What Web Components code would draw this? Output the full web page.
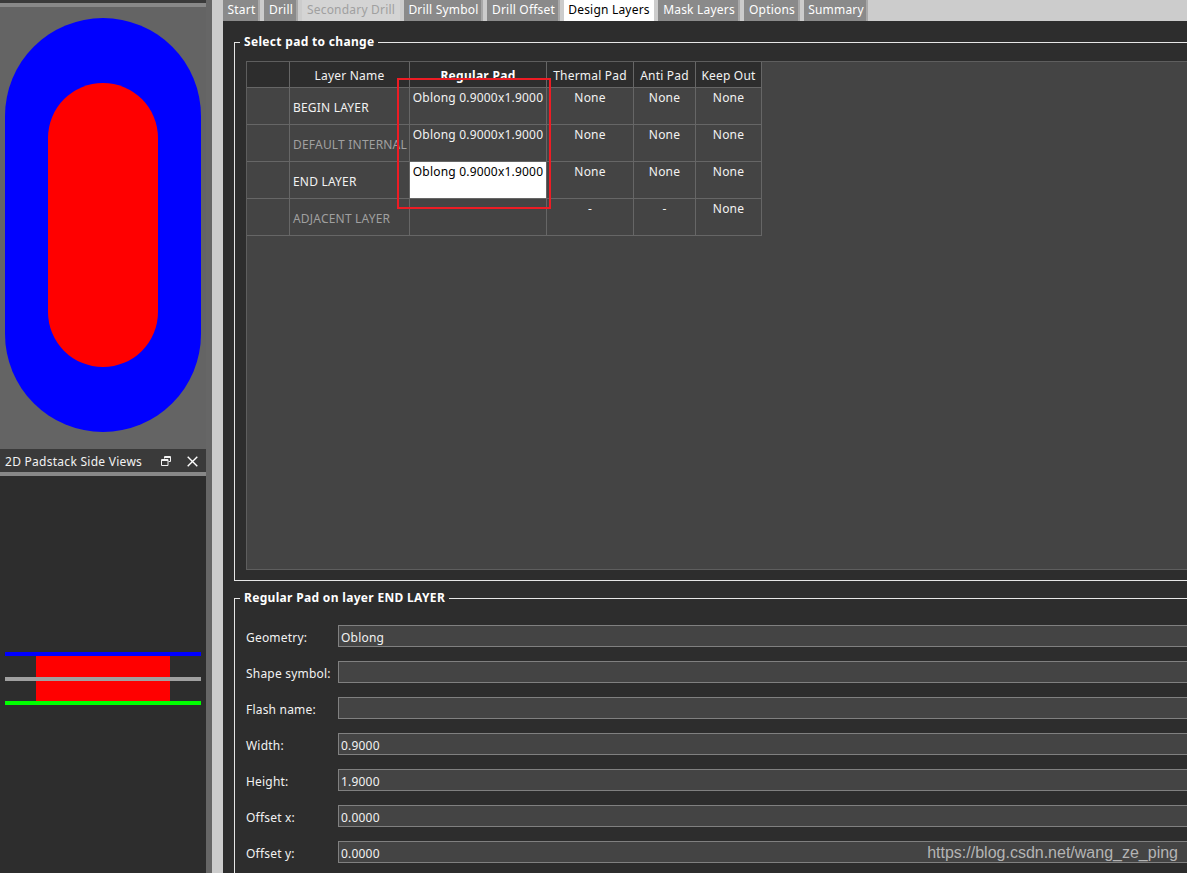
<!DOCTYPE html>
<html>
<head>
<meta charset="utf-8">
<title>Padstack Editor</title>
<style>
  html, body { margin: 0; height: 100%; overflow: hidden; background: #2d2d2d; }
  body { font: 12px "Noto Sans", sans-serif; letter-spacing: .2px; color: #f2f2f2; }
</style>
</head>
<body>
<pad-app>
  <pad-side slot="side"></pad-side>
  <tab-bar slot="main">
    <tab-item w="37">Start</tab-item>
    <tab-item w="34">Drill</tab-item>
    <tab-item w="98" state="disabled">Secondary Drill</tab-item>
    <tab-item w="79">Drill Symbol</tab-item>
    <tab-item w="73">Drill Offset</tab-item>
    <tab-item w="90" state="active">Design Layers</tab-item>
    <tab-item w="82">Mask Layers</tab-item>
    <tab-item w="56">Options</tab-item>
    <tab-item w="64">Summary</tab-item>
  </tab-bar>
  <group-box slot="main" title="Select pad to change" h="546"><pad-table></pad-table></group-box>
  <group-box slot="main" title="Regular Pad on layer END LAYER" h="300">
    <form-row label="Geometry:" value="Oblong"></form-row>
    <form-row label="Shape symbol:"></form-row>
    <form-row label="Flash name:"></form-row>
    <form-row label="Width:" value="0.9000"></form-row>
    <form-row label="Height:" value="1.9000"></form-row>
    <form-row label="Offset x:" value="0.0000"></form-row>
    <form-row label="Offset y:" value="0.0000"></form-row>
  </group-box>
</pad-app>

<script>
class PadApp extends HTMLElement {
  constructor() {
    super();
    this.attachShadow({ mode: "open" });
    this.shadowRoot.innerHTML = `
      <style>
        :host {
          display: grid;
          grid-template-columns: 206px 6px 11px 964px;
          width: 1187px;
          height: 873px;
          overflow: hidden;
          position: relative;
        }
        .sash { background: #666666; }
        .gutter { background: #cccccc; }
        .main { background: #2d2d2d; min-width: 0; }
        .note {
          position: absolute;
          left: 397px;
          top: 78px;
          width: 150px;
          height: 127px;
          border: 2px solid #ed1c24;
        }
        .mark {
          position: absolute;
          right: 9px;
          top: 844px;
          font: 16px "Liberation Sans", sans-serif;
          letter-spacing: 0;
          color: #b4b4b4;
        }
      </style>
      <slot name="side"></slot>
      <div class="sash"></div>
      <div class="gutter"></div>
      <div class="main"><slot name="main"></slot></div>
      <div class="note"></div>
      <div class="mark">https://blog.csdn.net/wang_ze_ping</div>
    `;
  }
}

class PadSide extends HTMLElement {
  constructor() {
    super();
    this.attachShadow({ mode: "open" });
    this.shadowRoot.innerHTML = `
      <style>
        :host { display: flex; flex-direction: column; background: #2d2d2d; height: 873px; }
        .top { height: 3px; background: #3a3a3a; }
        .bar { height: 4px; background: #888888; flex: none; }
        .canvas {
          box-sizing: border-box;
          height: 442px;
          padding-bottom: 6px;
          background: #646464;
          display: flex;
          justify-content: center;
          align-items: center;
        }
        .blue {
          width: 196px;
          height: 414px;
          border-radius: 98px;
          background: #0000ff;
          display: flex;
          justify-content: center;
          align-items: center;
        }
        .red { width: 110px; height: 284px; border-radius: 55px; background: #ff0000; }
        .head {
          box-sizing: border-box;
          height: 23px;
          background: #3a3a3a;
          display: flex;
          align-items: center;
          padding: 1px 8px 0 5px;
          gap: 16px;
          letter-spacing: .27px;
          color: #f2f2f2;
        }
        .head span { flex: 1; white-space: nowrap; }
        svg { display: block; }
        .side {
          padding: 176px 5px 0;
        }
        .line { height: 4px; }
        .fill {
          margin: 0 31px;
          height: 45px;
          background: #ff0000;
          display: flex;
          align-items: center;
        }
        .gray { background: #a0a0a0; flex: 1; margin: 0 -31px; }
      </style>
      <div class="top"></div>
      <div class="bar"></div>
      <div class="canvas"><div class="blue"><div class="red"></div></div></div>
      <div class="head">
        <span>2D Padstack Side Views</span>
        <svg width="10" height="10" viewBox="0 0 10 10" fill="none" stroke="#f2f2f2">
          <path d="M3.5 2.5V.5h6v5h-2"/><path d="M.5 3.5h6.5v6H.5z"/><path d="M.5 4.5h6.5M3.5 1.5h6" />
        </svg>
        <svg width="11" height="11" viewBox="0 0 11 11" fill="none" stroke="#ffffff" stroke-width="1.4">
          <path d="M.7.7l9.6 9.6M10.3.7L.7 10.3"/>
        </svg>
      </div>
      <div class="bar"></div>
      <div class="side">
        <div class="line" style="background:#0000ff"></div>
        <div class="fill"><div class="line gray"></div></div>
        <div class="line" style="background:#00ff00"></div>
      </div>
    `;
  }
}

class TabBar extends HTMLElement {
  constructor() {
    super();
    this.attachShadow({ mode: "open" });
    this.shadowRoot.innerHTML = `
      <style>
        :host {
          display: flex;
          gap: 4px;
          height: 21px;
          margin-bottom: 14px;
          background: #cccccc;
        }
      </style>
      <slot></slot>
    `;
  }
}

class TabItem extends HTMLElement {
  constructor() {
    super();
    this.attachShadow({ mode: "open" });
    this.shadowRoot.innerHTML = `
      <style>
        :host {
          display: flex;
          justify-content: center;
          align-items: center;
          box-sizing: border-box;
          flex: none;
          height: 21px;
          padding-bottom: 2px;
          background: #8a8a8a;
          box-shadow: inset -2px 0 0 #a8a8a8;
          color: #ffffff;
          white-space: nowrap;
        }
        :host([state="active"]) { background: #ffffff; color: #000000; box-shadow: none; }
        :host([state="disabled"]) { background: #d4d4d4; color: #a0a0a0; box-shadow: none; }
      </style>
      <slot></slot>
    `;
  }
  connectedCallback() {
    this.style.width = this.getAttribute("w") + "px";
  }
}

class GroupBox extends HTMLElement {
  constructor() {
    super();
    this.attachShadow({ mode: "open" });
    this.shadowRoot.innerHTML = `
      <style>
        :host { display: block; margin: 0 0 10px 11px; width: 1100px; }
        fieldset {
          border: 1px solid #e6e6e6;
          margin: 0;
          padding: 0 11px;
          box-sizing: border-box;
        }
        legend {
          margin-left: -6px;
          padding: 0 4px;
          font-weight: 700;
          line-height: 14px;
          letter-spacing: .32px;
          color: #ffffff;
        }
      </style>
      <fieldset><legend></legend><slot></slot></fieldset>
    `;
  }
  connectedCallback() {
    this.shadowRoot.querySelector("legend").textContent = this.getAttribute("title");
    this.removeAttribute("title");
    this.shadowRoot.querySelector("fieldset").style.height = this.getAttribute("h") + "px";
  }
}

class PadTable extends HTMLElement {
  constructor() {
    super();
    this.attachShadow({ mode: "open" });
    const rows = [
      ["BEGIN LAYER", "Oblong 0.9000x1.9000", "None", "None", "None"],
      ["DEFAULT INTERNAL", "Oblong 0.9000x1.9000", "None", "None", "None", "dim"],
      ["END LAYER", "Oblong 0.9000x1.9000", "None", "None", "None", "sel"],
      ["ADJACENT LAYER", "", "-", "-", "None", "dim"],
    ];
    let cells = ["", "Layer Name", "<b>Regular Pad</b>", "Thermal Pad", "Anti Pad", "Keep Out"]
      .map((t) => `<div class="c h">${t}</div>`).join("");
    rows.forEach((r) => {
      cells += `<div class="c"></div>`;
      cells += `<div class="c name ${r[5] === "dim" ? "dim" : ""}">${r[0]}</div>`;
      cells += `<div class="c pad ${r[5] === "sel" ? "sel" : ""}">${r[1]}</div>`;
      cells += `<div class="c pad">${r[2]}</div><div class="c pad">${r[3]}</div><div class="c pad">${r[4]}</div>`;
    });
    this.shadowRoot.innerHTML = `
      <style>
        :host {
          display: block;
          height: 507px;
          margin-top: 12px;
          background: #444444;
          border: 1px solid #5e5e5e;
        }
        .grid {
          display: grid;
          grid-template-columns: 43px 120px 137px 87px 62px 66px;
          grid-template-rows: 26px repeat(4, 37px);
          width: 515px;
        }
        .c {
          box-sizing: border-box;
          border-right: 1px solid #666666;
          border-bottom: 1px solid #666666;
          white-space: nowrap;
          overflow: hidden;
          text-align: center;
        }
        .h { background: #2d2d2d; color: #f2f2f2; padding-top: 1px; line-height: 26px; }
        .name { text-align: left; padding: 11px 0 0 3px; color: #f2f2f2; }
        .dim { color: #a0a0a0; }
        .pad { padding-top: 1px; color: #f2f2f2; }
        .sel { background: #ffffff; color: #000000; }
        b { font-weight: 700; color: #fff; letter-spacing: .3px; }
      </style>
      <div class="grid">${cells}</div>
    `;
  }
}

class FormRow extends HTMLElement {
  constructor() {
    super();
    this.attachShadow({ mode: "open" });
    this.shadowRoot.innerHTML = `
      <style>
        :host {
          display: flex;
          align-items: center;
          height: 22px;
          margin-bottom: 14px;
          color: #f2f2f2;
        }
        :host(:first-of-type) { margin-top: 20px; }
        label { width: 92px; flex: none; white-space: nowrap; padding-top: 2px; }
        .field {
          flex: 1;
          box-sizing: border-box;
          height: 22px;
          padding: 1px 0 0 2px;
          line-height: 22px;
          background: #444444;
          border: 1px solid #808080;
        }
      </style>
      <label></label><div class="field"></div>
    `;
  }
  connectedCallback() {
    this.shadowRoot.querySelector("label").textContent = this.getAttribute("label");
    this.shadowRoot.querySelector(".field").textContent = this.getAttribute("value") || "";
  }
}

customElements.define("pad-app", PadApp);
customElements.define("pad-side", PadSide);
customElements.define("tab-bar", TabBar);
customElements.define("tab-item", TabItem);
customElements.define("group-box", GroupBox);
customElements.define("pad-table", PadTable);
customElements.define("form-row", FormRow);
</script>
</body>
</html>
